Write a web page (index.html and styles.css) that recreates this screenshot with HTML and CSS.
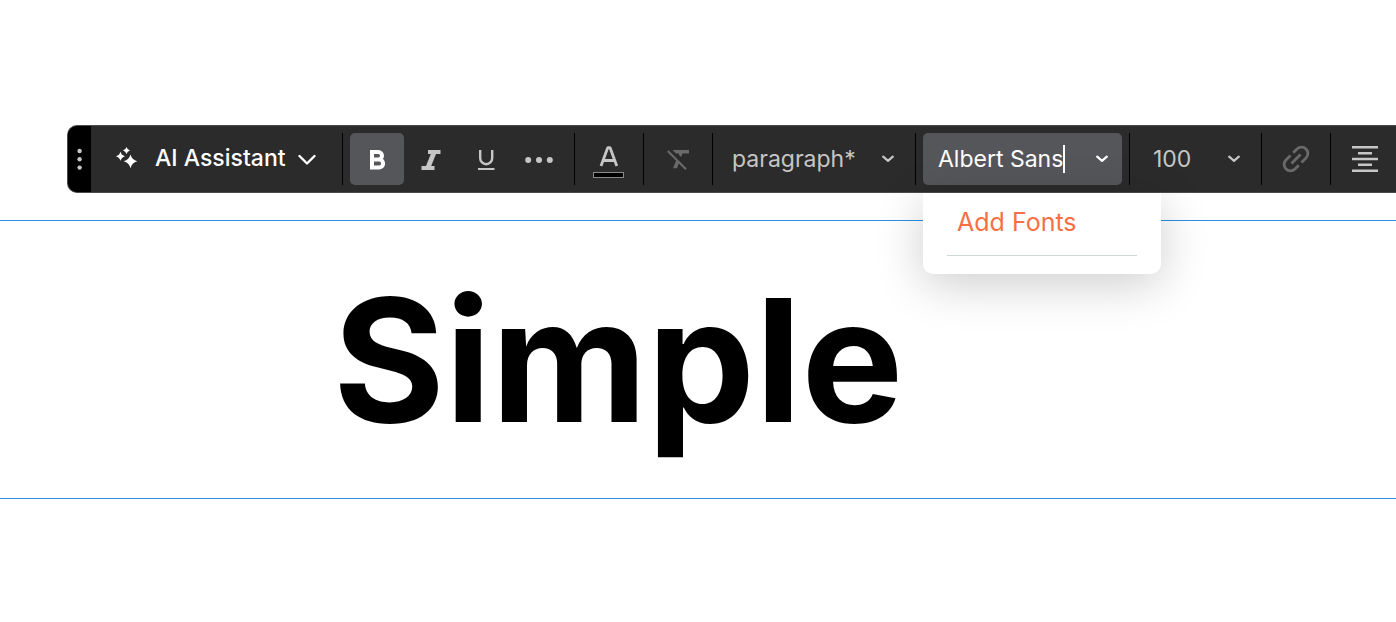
FILE: index.html
```
<!DOCTYPE html>
<html lang="en">
<head>
  <meta charset="UTF-8">
  <meta name="viewport" content="width=device-width, initial-scale=1.0">
  <title>Text Editor</title>
  <link rel="stylesheet" href="styles.css">
</head>
<body>
  <div class="toolbar" role="toolbar" aria-label="Text formatting">
    <button type="button" class="drag-handle" aria-label="Move toolbar">
      <svg width="6" height="24" viewBox="0 0 6 24" fill="currentColor">
        <circle cx="2.6" cy="4" r="2.2"/>
        <circle cx="2.6" cy="12.3" r="2.2"/>
        <circle cx="2.6" cy="20.6" r="2.2"/>
      </svg>
    </button>

    <div class="group group-ai">
      <button type="button" class="ai-btn">
        <svg width="22" height="22" viewBox="0 0 22 22" fill="currentColor">
          <path d="M14.5 7.5Q15.8 12.7 21.3 14.3Q15.8 15.9 14.5 21.3Q13.2 15.9 7.7 14.3Q13.2 12.7 14.5 7.5Z"/>
          <path d="M4.5 4.7Q5.5 8.2 9 9.2Q5.5 10.2 4.5 13.7Q3.5 10.2 0 9.2Q3.5 8.2 4.5 4.7Z"/>
          <path d="M10.5 0Q11.3 2.7 14 3.5Q11.3 4.3 10.5 7Q9.7 4.3 7 3.5Q9.7 2.7 10.5 0Z"/>
        </svg>
        <span class="ai-label">AI Assistant</span>
        <svg width="18" height="14" viewBox="0 0 18 14" fill="none" stroke="currentColor" stroke-width="2.4" stroke-linecap="round" stroke-linejoin="round">
          <path d="M1.5 5L9 12.5L16.5 5"/>
        </svg>
      </button>
    </div>

    <div class="group group-format">
      <button type="button" class="tool active" aria-label="Bold" aria-pressed="true">
        <svg width="24" height="24" viewBox="0 0 24 24" fill="none" stroke="currentColor" stroke-width="4">
          <path d="M7 5H13.3A3.7 3.7 0 0 1 13.3 12.4H7M7 12.4H14A4.1 4.1 0 0 1 14 20.6H7M7 3V22.6"/>
        </svg>
      </button>
      <button type="button" class="tool" aria-label="Italic">
        <svg width="24" height="24" viewBox="0 0 24 24" fill="currentColor">
          <path d="M9 3H21.5V7H17L12.2 19H15.5V23H2.5V19H7L11.8 7H9Z"/>
        </svg>
      </button>
      <button type="button" class="tool" aria-label="Underline">
        <svg width="24" height="24" viewBox="0 0 24 24" fill="none" stroke="currentColor">
          <path stroke-width="2.4" d="M7.2 3V11.2A6 6 0 0 0 19.2 11.2V3"/>
          <path stroke-width="2" d="M5 22H21.5"/>
        </svg>
      </button>
      <button type="button" class="tool" aria-label="More">
        <svg width="28" height="10" viewBox="0 0 28 10" fill="currentColor">
          <circle cx="3.2" cy="6" r="3"/>
          <circle cx="14" cy="6" r="3"/>
          <circle cx="24.8" cy="6" r="3"/>
        </svg>
      </button>
    </div>

    <div class="group">
      <button type="button" class="tool" aria-label="Text color">
        <svg width="32" height="38" viewBox="0 0 32 38">
          <path fill="none" stroke="currentColor" stroke-width="2.8" stroke-linejoin="bevel" d="M8 26L14.8 7.6H17L23.8 26M10.5 20.5H21.5"/>
          <rect x=".5" y="32.5" width="30" height="5" fill="#000" stroke="#8a8a8a"/>
        </svg>
      </button>
    </div>

    <div class="group">
      <button type="button" class="tool muted" aria-label="Clear formatting">
        <svg width="24" height="24" viewBox="0 0 24 24" fill="currentColor">
          <path d="M6.5 3H23V6.6H16.5L15.2 10L12.6 7.4L13 6.6H10Z"/>
          <path d="M10.4 13L13 15.6L11 21.3H7Z"/>
          <path fill="none" stroke="currentColor" stroke-width="2" d="M1.8 4L20 22.2"/>
        </svg>
      </button>
    </div>

    <div class="group">
      <label class="picker picker-style">
        <select aria-label="Text style">
          <option>paragraph*</option>
        </select>
        <svg class="chevron" width="12" height="8" viewBox="0 0 12 8"><path d="M1.2 1.6L6 5.8L10.8 1.6"/></svg>
      </label>
    </div>

    <div class="group">
      <div class="picker picker-font">
        <div class="font-field">
          <input type="text" id="font" value="Albert Sans" aria-label="Font" spellcheck="false">
          <span class="caret"></span>
        </div>
        <button type="button" class="font-toggle" aria-label="Show fonts" aria-expanded="true">
          <svg class="chevron" width="12" height="8" viewBox="0 0 12 8"><path d="M1.2 1.6L6 5.8L10.8 1.6"/></svg>
        </button>
        <div class="font-menu">
          <button type="button" class="add-fonts">Add Fonts</button>
        </div>
      </div>
    </div>

    <div class="group">
      <label class="picker picker-size">
        <select aria-label="Font size">
          <option>100</option>
        </select>
        <svg class="chevron" width="12" height="8" viewBox="0 0 12 8"><path d="M1.2 1.6L6 5.8L10.8 1.6"/></svg>
      </label>
    </div>

    <div class="group">
      <button type="button" class="tool muted" aria-label="Link">
        <svg width="30" height="30" viewBox="0 0 30 30" fill="none" stroke="currentColor" stroke-width="2.8">
          <path d="M12.2 8.8L16 5A5.9 5.9 0 0 1 25 14L20.5 18.5"/>
          <path d="M9.5 11.5L5 16A5.9 5.9 0 0 0 14 25L17.8 21.2"/>
          <path d="M10.5 19.5L19.5 10.5"/>
        </svg>
      </button>
    </div>

    <div class="group">
      <button type="button" class="tool" aria-label="Align center">
        <svg width="26" height="26" viewBox="0 0 26 26" fill="currentColor">
          <path d="M0 0H26V2.6H0ZM6 6H20V8.6H6ZM0 11.7H26V14.3H0ZM6 17.4H20V20H6ZM0 23.4H26V26H0Z"/>
        </svg>
      </button>
    </div>
  </div>

  <main class="text-block">
    <h1>Simple</h1>
  </main>
</body>
</html>
```

FILE: styles.css
```
:root {
  --bar-bg: #2b2b2b;
  --bar-active: #55565a;
  --icon: #c6c6c6;
  --icon-muted: #6a6a6a;
  --guide: #2b8fe6;
  --accent: #f86f45;
}

* {
  margin: 0;
  padding: 0;
  box-sizing: border-box;
}

body {
  padding-top: 125px;
  background-color: #fff;
  color: #000;
  font-family: Inter, "Open Sans", sans-serif;
  overflow-x: hidden;
}

button,
input,
select {
  border: none;
  background: none;
  color: inherit;
  font: inherit;
}

button,
select {
  cursor: pointer;
}

/* Toolbar */
.toolbar {
  position: relative;
  display: flex;
  align-items: stretch;
  height: 68px;
  margin-left: 67px;
  border: 1px solid #4c4c4c;
  border-right: none;
  border-radius: 10px 0 0 10px;
  background-color: var(--bar-bg);
  color: var(--icon);
  font-size: 23px;
}

.drag-handle {
  display: flex;
  flex-shrink: 0;
  align-items: center;
  justify-content: center;
  width: 23px;
  border-radius: 9px 0 0 9px;
  background-color: #000;
}

.group {
  display: flex;
  flex-shrink: 0;
  margin: 7px 0;
  padding: 0 7px;
  border-right: 1px solid #000;
}

.group:last-child {
  border-right: none;
}

.group-ai {
  width: 252px;
  padding: 0 18px;
}

.group-format {
  padding-right: 8px;
}

.ai-btn {
  display: flex;
  align-items: center;
  width: 100%;
  height: 50px;
  padding-left: 7px;
  color: #fff;
  white-space: nowrap;
}

.ai-label {
  margin: 0 12px 0 17px;
  font-weight: 500;
}

.tool {
  display: flex;
  align-items: center;
  justify-content: center;
  width: 54px;
  height: 52px;
  border-radius: 5px;
}

.tool.active {
  background-color: var(--bar-active);
  color: #fff;
}

.tool.muted {
  color: var(--icon-muted);
}

/* Pickers */
.picker {
  position: relative;
  display: grid;
  align-items: center;
  height: 52px;
  border-radius: 5px;
}

.picker select {
  grid-area: 1 / 1;
  width: 100%;
  height: 100%;
  appearance: none;
}

.picker > .chevron {
  grid-area: 1 / 1;
  justify-self: end;
  margin-right: 14px;
  pointer-events: none;
}

.chevron {
  fill: none;
  stroke: currentColor;
  stroke-width: 2.2;
  stroke-linecap: round;
  stroke-linejoin: round;
}

.picker-style {
  width: 188px;
}

.picker-style select {
  padding-left: 12px;
}

.picker-size {
  width: 117px;
}

.picker-size select {
  padding-left: 16px;
}

.picker-font {
  display: flex;
  justify-content: space-between;
  width: 199px;
  padding: 0 14px 0 15px;
  background-color: var(--bar-active);
  color: #fff;
}

.font-field {
  display: flex;
  align-items: center;
}

.font-field input {
  width: 125px;
  outline: none;
}

.caret {
  width: 2px;
  height: 28px;
  background-color: #fff;
}

.font-toggle {
  display: flex;
  align-items: center;
  height: 100%;
}

.font-menu {
  position: absolute;
  top: 60px;
  left: 0;
  z-index: 1;
  width: 238px;
  padding: 0 24px 18px;
  border-radius: 0 0 10px 10px;
  background-color: #fff;
  box-shadow: 0 10px 48px rgba(0, 0, 0, 0.2);
}

.add-fonts {
  width: 100%;
  height: 63px;
  padding: 0 10px 4px;
  border-bottom: 1px solid #cfd6d6;
  color: var(--accent);
  font-size: 25px;
  text-align: left;
}

/* Canvas */
.text-block {
  margin-top: 27px;
  padding-left: 333px;
  border-top: 1px solid var(--guide);
  border-bottom: 1px solid var(--guide);
}

.text-block h1 {
  font-size: 171px;
  font-weight: 700;
  line-height: 277px;
}
```
